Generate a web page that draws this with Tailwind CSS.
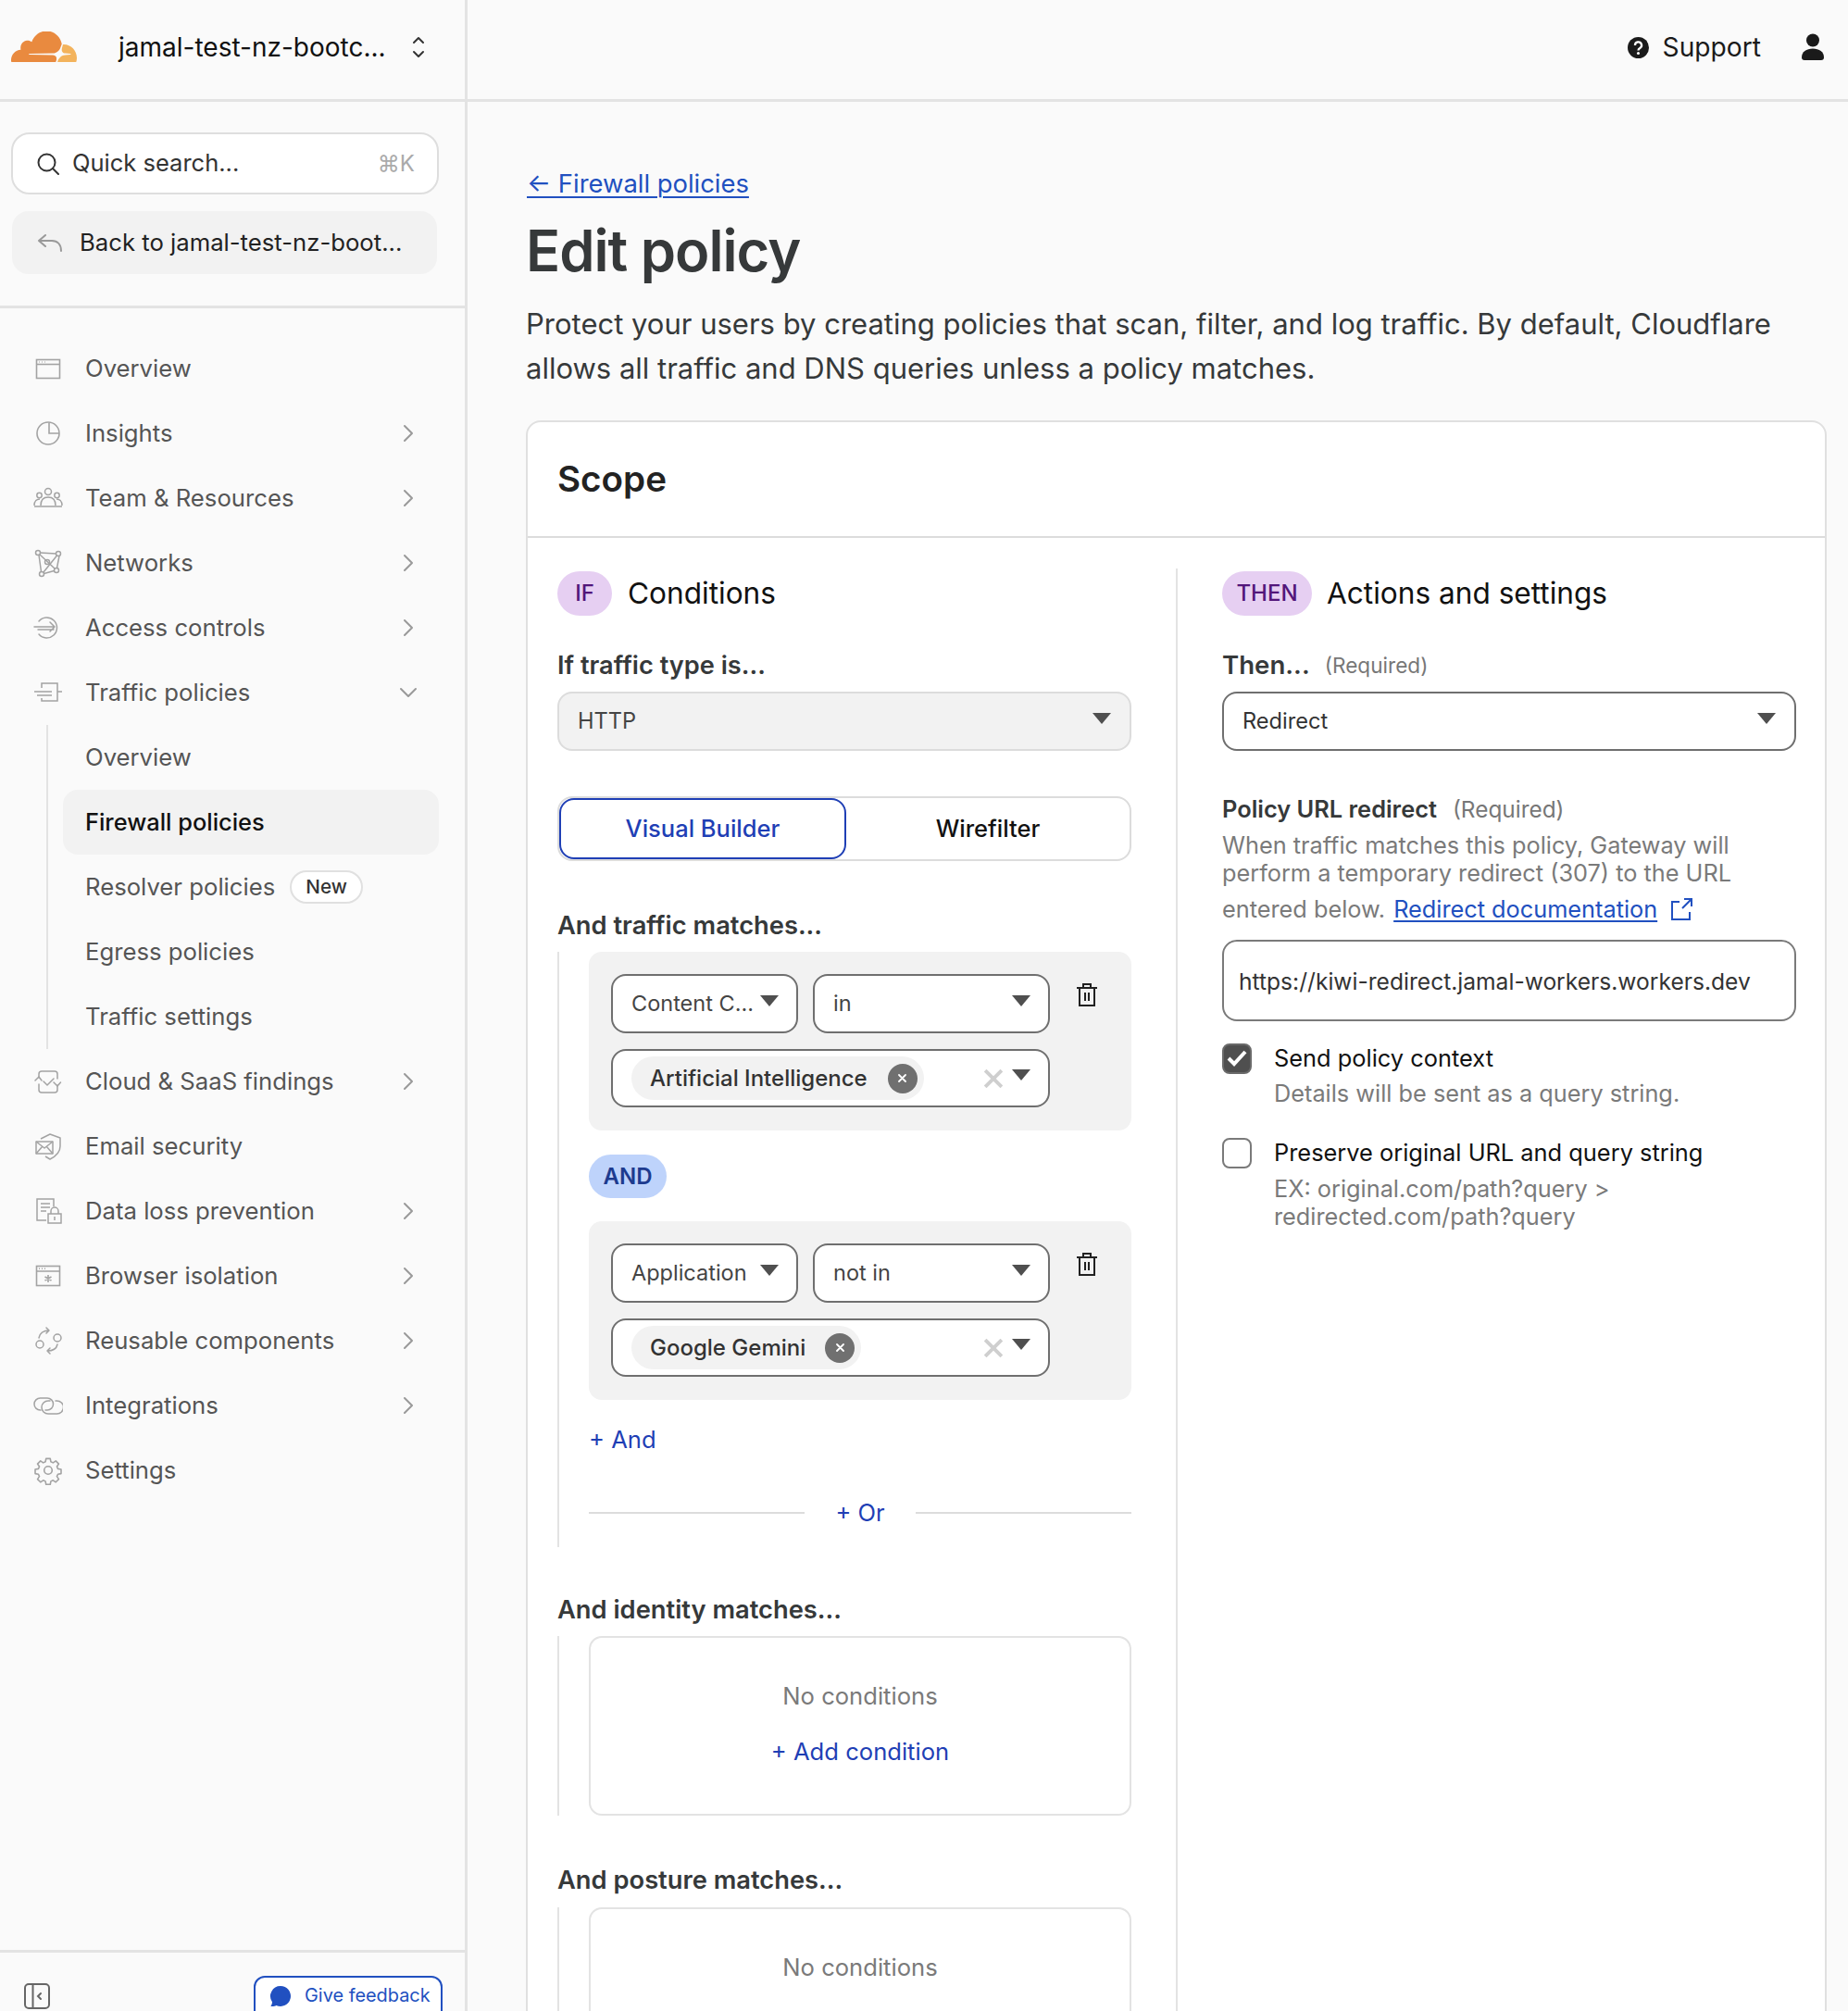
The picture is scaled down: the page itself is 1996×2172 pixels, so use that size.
<!doctype html>
<html lang="en">
<head>
<meta charset="utf-8">
<script src="https://cdn.jsdelivr.net/npm/@tailwindcss/browser@4"></script>
<title>Edit policy</title>
</head>
<body class="font-[Inter,sans-serif]">
<div class="flex w-[1996px] h-[2172px] overflow-hidden bg-[#fafafa] text-[#36393a]">

<!-- Sidebar -->
<aside class="w-[505px] shrink-0 flex flex-col border-r-[3px] border-[#e3e3e3] text-[#555]">
  <div class="h-[110px] shrink-0 border-b-[3px] border-[#e3e3e3] flex items-center pl-[12px] pb-[5px]">
    <svg class="w-[71px] h-[33px] shrink-0 mb-[1px]" viewBox="0 6.75 24 10.7" preserveAspectRatio="none"><path fill="#E98A3F" d="M16.5088 16.8447c.1475-.5068.0908-.9707-.1553-1.3154-.2246-.3164-.6045-.499-1.0615-.5205l-8.6592-.1123a.1559.1559 0 0 1-.1333-.0713c-.0283-.042-.0351-.0986-.021-.1553.0278-.084.1123-.1484.2036-.1562l8.7359-.1123c1.0351-.0489 2.1601-.8868 2.5537-1.9136l.499-1.3013c.0215-.0561.0293-.1128.0147-.168-.5625-2.5463-2.835-4.4453-5.5499-4.4453-2.5039 0-4.6284 1.6177-5.3876 3.8614-.4927-.3658-1.1187-.5625-1.794-.499-1.2026.119-2.1665 1.083-2.2861 2.2856-.0283.31-.0069.6128.0635.894C1.5683 13.171 0 14.7754 0 16.752c0 .1748.0142.3515.0352.5273.0141.083.0844.1475.1689.1475h15.9814c.0909 0 .1758-.0645.2032-.1553l.12-.4268z"/><path fill="#F3B35C" d="M19.2656 11.2813c-.0771 0-.1611 0-.2383.0112-.0566 0-.1054.0415-.127.0976l-.3378 1.1744c-.1475.5068-.0918.9707.1543 1.3164.2256.3164.6055.498 1.0625.5195l1.8437.1133c.0557 0 .1055.0263.1329.0703.0283.043.0351.1074.0214.1562-.0283.084-.1132.1485-.204.1553l-1.921.1123c-1.041.0488-2.1582.8867-2.5527 1.914l-.1406.3585c-.0283.0713.0215.1416.0986.1416h6.5977c.0771 0 .1474-.0489.169-.126.1122-.4082.1757-.837.1757-1.2803 0-2.6025-2.125-4.727-4.7344-4.727"/></svg>
    <span class="ml-[45px] text-[28px] text-[#111] whitespace-nowrap">jamal-test-nz-bootc...</span>
    <svg class="ml-[27px] w-[16px] h-[26px]" viewBox="0 0 16 26" fill="none" stroke="#333" stroke-width="2" stroke-linecap="round" stroke-linejoin="round"><path d="M3 8l5-5 5 5M3 18l5 5 5-5"/></svg>
  </div>

  <div class="h-[223px] shrink-0 border-b-[3px] border-[#e3e3e3] pl-[12px] pt-[33px]">
    <div class="h-[67px] w-[462px] rounded-[20px] border-2 border-[#dedede] bg-white flex items-center pl-[26px] pr-[24px] text-[25.5px] text-[#333]">
      <svg class="w-[24px] h-[24px] mr-[14px] shrink-0" viewBox="0 0 24 24" fill="none" stroke="#333" stroke-width="2" stroke-linecap="round"><circle cx="10.5" cy="10.5" r="9"/><path d="M17 17l6 6"/></svg>
      <span class="flex-1">Quick search...</span>
      <span class="text-[#aaa] text-[24px]">⌘K</span>
    </div>
    <div class="mt-[18px] ml-[1px] h-[68px] w-[459px] rounded-[18px] bg-[#f2f2f2] flex items-center pl-[27px] text-[25.7px] text-[#222] whitespace-nowrap">
      <svg class="w-[28px] h-[21px] mr-[18px] shrink-0" viewBox="0 0 28 21" fill="none" stroke="#999" stroke-width="2" stroke-linecap="round" stroke-linejoin="round"><path d="M9 2L2 8l7 6M2 8h14c6 0 10 4 10 11"/></svg>
      <span>Back to jamal-test-nz-boot...</span>
    </div>
  </div>

  <nav class="pt-[30px] pl-[36px] text-[25.7px] flex-1">
    <div class="h-[70px] flex items-center"><svg class="w-[32px] h-[32px] mr-[24px] shrink-0" viewBox="0 0 32 32" fill="none" stroke="#a3a3a3" stroke-width="1.6"><rect x="3.5" y="6.5" width="25" height="20"/><path d="M3.5 11.5h25"/><path d="M6 9h1M9 9h1M12 9h1" stroke-width="1.2"/></svg><span>Overview</span></div>
    <div class="h-[70px] flex items-center"><svg class="w-[32px] h-[32px] mr-[24px] shrink-0" viewBox="0 0 32 32" fill="none" stroke="#a3a3a3" stroke-width="1.6"><circle cx="16" cy="16" r="12"/><path d="M17 4.500V16h11"/></svg><span class="flex-1">Insights</span><svg class="w-[12px] h-[20px] mr-[55px]" viewBox="0 0 12 20" fill="none" stroke="#999" stroke-width="2" stroke-linecap="round" stroke-linejoin="round"><path d="M2 2l8 8-8 8"/></svg></div>
    <div class="h-[70px] flex items-center"><svg class="w-[32px] h-[32px] mr-[24px] shrink-0" viewBox="0 0 32 32" fill="none" stroke="#a3a3a3" stroke-width="1.5"><circle cx="16" cy="9" r="3.5"/><circle cx="6.5" cy="13" r="2.7"/><circle cx="25.5" cy="13" r="2.7"/><path d="M1 24c0-5 3-7 6-7M31 24c0-5-3-7-6-7M8 24c0-6 3-9 8-9s8 3 8 9M1 25h30"/></svg><span class="flex-1">Team &amp; Resources</span><svg class="w-[12px] h-[20px] mr-[55px]" viewBox="0 0 12 20" fill="none" stroke="#999" stroke-width="2" stroke-linecap="round" stroke-linejoin="round"><path d="M2 2l8 8-8 8"/></svg></div>
    <div class="h-[70px] flex items-center"><svg class="w-[32px] h-[32px] mr-[24px] shrink-0" viewBox="0 0 32 32" fill="none" stroke="#a3a3a3" stroke-width="1.5"><circle cx="5" cy="5" r="2.5"/><circle cx="27" cy="6" r="2.5"/><circle cx="9" cy="28" r="2.5"/><circle cx="25" cy="24" r="2.5"/><circle cx="15" cy="15" r="2.5"/><path d="M7.5 5L24.500 6M6 7.500L8.500 25.500M28 8.500L25.500 21.500M11.500 27.500L22.500 24.500M7 7L23 22M25.500 8L11 26"/></svg><span class="flex-1">Networks</span><svg class="w-[12px] h-[20px] mr-[55px]" viewBox="0 0 12 20" fill="none" stroke="#999" stroke-width="2" stroke-linecap="round" stroke-linejoin="round"><path d="M2 2l8 8-8 8"/></svg></div>
    <div class="h-[70px] flex items-center"><svg class="w-[32px] h-[32px] mr-[24px] shrink-0" viewBox="0 0 32 32" fill="none" stroke="#a3a3a3" stroke-width="1.5" stroke-linecap="round" stroke-linejoin="round"><path d="M6 9a11 11 0 1 1 0 14"/><path d="M1 15h22M5 18h17M18 10l5 5-5 5"/></svg><span class="flex-1">Access controls</span><svg class="w-[12px] h-[20px] mr-[55px]" viewBox="0 0 12 20" fill="none" stroke="#999" stroke-width="2" stroke-linecap="round" stroke-linejoin="round"><path d="M2 2l8 8-8 8"/></svg></div>
    <div class="h-[70px] flex items-center"><svg class="w-[32px] h-[32px] mr-[24px] shrink-0" viewBox="0 0 32 32" fill="none" stroke="#a3a3a3" stroke-width="1.5"><path d="M9 11V6h17v19H9v-3"/><path d="M1 15h19M4 19h16M26 15h5"/></svg><span class="flex-1">Traffic policies</span><svg class="w-[20px] h-[12px] mr-[51px]" viewBox="0 0 20 12" fill="none" stroke="#999" stroke-width="2" stroke-linecap="round" stroke-linejoin="round"><path d="M2 2l8 8 8-8"/></svg></div>

    <div class="ml-[14px] border-l-2 border-[#e3e3e3] pl-[16px] w-[424px]">
      <div class="h-[70px] flex items-center pl-[24px]">Overview</div>
      <div class="h-[70px] flex items-center pl-[24px] rounded-[16px] bg-[#f2f2f2] text-[#111] text-[25.4px] font-medium">Firewall policies</div>
      <div class="h-[70px] flex items-center pl-[24px]">Resolver policies<span class="ml-[16px] h-[36px] px-[15px] flex items-center rounded-full border-2 border-[#e0e0e0] bg-white text-[20.7px] font-medium text-[#333]">New</span></div>
      <div class="h-[70px] flex items-center pl-[24px]">Egress policies</div>
      <div class="h-[70px] flex items-center pl-[24px]">Traffic settings</div>
    </div>

    <div class="h-[70px] flex items-center"><svg class="w-[32px] h-[32px] mr-[24px] shrink-0" viewBox="0 0 32 32" fill="none" stroke="#a3a3a3" stroke-width="1.5" stroke-linecap="round" stroke-linejoin="round"><path d="M6 12V8a3 3 0 0 1 3-3h14a3 3 0 0 1 3 3v5M26 20v5a3 3 0 0 1-3 3H9a3 3 0 0 1-3-3v-6"/><path d="M2 15l4-4 3 4M29.500 17l-3.500 4-4-4M11 16l4 4 7-7"/></svg><span class="flex-1">Cloud &amp; SaaS findings</span><svg class="w-[12px] h-[20px] mr-[55px]" viewBox="0 0 12 20" fill="none" stroke="#999" stroke-width="2" stroke-linecap="round" stroke-linejoin="round"><path d="M2 2l8 8-8 8"/></svg></div>
    <div class="h-[70px] flex items-center"><svg class="w-[32px] h-[32px] mr-[24px] shrink-0" viewBox="0 0 32 32" fill="none" stroke="#a3a3a3" stroke-width="1.5" stroke-linejoin="round"><path d="M8 8l10-5 11 4v9c0 7-5 11-11 14l-5-3"/><rect x="3" y="11" width="18" height="13"/><path d="M3 11l9 7 9-7M3 24l7-8M21 24l-7-8"/></svg><span class="flex-1">Email security</span></div>
    <div class="h-[70px] flex items-center"><svg class="w-[32px] h-[32px] mr-[24px] shrink-0" viewBox="0 0 32 32" fill="none" stroke="#a3a3a3" stroke-width="1.5"><path d="M14 26H4V3h18v8"/><path d="M8 8h10M8 12h10M8 16h6"/><rect x="16" y="19" width="14" height="10"/><path d="M19 19v-3a4 4 0 0 1 8 0v3M23 22v4"/></svg><span class="flex-1">Data loss prevention</span><svg class="w-[12px] h-[20px] mr-[55px]" viewBox="0 0 12 20" fill="none" stroke="#999" stroke-width="2" stroke-linecap="round" stroke-linejoin="round"><path d="M2 2l8 8-8 8"/></svg></div>
    <div class="h-[70px] flex items-center"><svg class="w-[32px] h-[32px] mr-[24px] shrink-0" viewBox="0 0 32 32" fill="none" stroke="#a3a3a3" stroke-width="1.6"><rect x="3.500" y="5.500" width="25" height="21"/><path d="M3.500 11h25M6 8.300h1M9 8.300h1M12 8.300h1M16 15v8M12.500 17l7 4M19.500 17l-7 4"/></svg><span class="flex-1">Browser isolation</span><svg class="w-[12px] h-[20px] mr-[55px]" viewBox="0 0 12 20" fill="none" stroke="#999" stroke-width="2" stroke-linecap="round" stroke-linejoin="round"><path d="M2 2l8 8-8 8"/></svg></div>
    <div class="h-[70px] flex items-center"><svg class="w-[32px] h-[32px] mr-[24px] shrink-0" viewBox="0 0 32 32" fill="none" stroke="#a3a3a3" stroke-width="1.5" stroke-linecap="round" stroke-linejoin="round"><circle cx="26" cy="13" r="4"/><circle cx="7" cy="20" r="4"/><path d="M6 13c1-5 5-8 11-8M14 2l3 3-3 3M26 20c-1 5-6 7-11 7M18 30l-3-3 3-3"/></svg><span class="flex-1">Reusable components</span><svg class="w-[12px] h-[20px] mr-[55px]" viewBox="0 0 12 20" fill="none" stroke="#999" stroke-width="2" stroke-linecap="round" stroke-linejoin="round"><path d="M2 2l8 8-8 8"/></svg></div>
    <div class="h-[70px] flex items-center"><svg class="w-[32px] h-[32px] mr-[24px] shrink-0" viewBox="0 0 32 32" fill="none" stroke="#a3a3a3" stroke-width="1.5" stroke-linecap="round"><path d="M8 21h-.5a6.500 6.500 0 0 1 0-13H15a6.500 6.500 0 0 1 6.500 6.500 6.500 6.500 0 0 1-6.500 6.500h-2"/><path d="M24 11h1.500a7 7 0 0 1 0 14H16a7 7 0 0 1-7-7 7 7 0 0 1 7-7h2"/></svg><span class="flex-1">Integrations</span><svg class="w-[12px] h-[20px] mr-[55px]" viewBox="0 0 12 20" fill="none" stroke="#999" stroke-width="2" stroke-linecap="round" stroke-linejoin="round"><path d="M2 2l8 8-8 8"/></svg></div>
    <div class="h-[70px] flex items-center"><svg class="w-[32px] h-[32px] mr-[24px] shrink-0" viewBox="0 0 24 24" fill="none" stroke="#a3a3a3" stroke-width="1.2" stroke-linejoin="round"><circle cx="12" cy="12" r="3.200"/><path d="M10.300 2.500h3.400l.5 2.600 1.800.8 2.200-1.500 2.400 2.400-1.500 2.200.8 1.800 2.600.5v3.400l-2.600.5-.8 1.800 1.500 2.200-2.400 2.400-2.200-1.500-1.800.8-.5 2.600h-3.400l-.5-2.600-1.800-.8-2.200 1.500-2.400-2.400 1.500-2.200-.8-1.800-2.600-.5v-3.400l2.600-.5.8-1.800-1.500-2.200 2.400-2.400 2.200 1.500 1.800-.8z"/></svg><span>Settings</span></div>
  </nav>

  <div class="h-[66px] shrink-0 border-t-[3px] border-[#e3e3e3] flex items-start justify-between pl-[26px] pr-[24px] pt-[25px]">
    <svg class="w-[28px] h-[28px] mt-[8px]" viewBox="0 0 28 28" fill="none" stroke="#666" stroke-width="2"><rect x="1" y="1" width="26" height="26" rx="4"/><path d="M9.500 1v26M18 11l-3 3 3 3" stroke-linecap="round"/></svg>
    <div class="w-[204px] h-[60px] shrink-0 rounded-[12px] border-2 border-[#2150c0] bg-white flex items-center pb-[17px] pl-[15px] text-[19.9px] text-[#2150c0]">
      <svg class="w-[24px] h-[24px] mr-[14px]" viewBox="0 0 24 24" fill="#2150c0"><path d="M12 1a11 11 0 1 1-4.600 21c-1.500.8-3.400 1.200-6 .9 1-1.300 1.500-2.800 1.600-4.600A11 11 0 0 1 12 1z"/></svg>
      <span>Give feedback</span>
    </div>
  </div>
</aside>

<!-- Main -->
<main class="flex-1 min-w-0">
  <header class="h-[110px] border-b-[3px] border-[#e3e3e3] flex items-center justify-end pr-[26px] pb-[5px] text-[#1a1a1a]">
    <svg class="w-[23px] h-[23px] mr-[15px]" viewBox="0 0 24 24"><circle cx="12" cy="12" r="12" fill="#1a1a1a"/><path d="M8.300 9.300a3.700 3.700 0 1 1 5.500 3.200c-1.200.7-1.800 1.200-1.800 2.500" fill="none" stroke="#fff" stroke-width="2.400"/><circle cx="12" cy="18.300" r="1.600" fill="#fff"/></svg>
    <span class="text-[28.2px] mr-[44px]">Support</span>
    <svg class="w-[24px] h-[30px]" viewBox="0 0 24 30" fill="#1a1a1a"><circle cx="12" cy="7.500" r="7"/><path d="M0 26c0-6 5-9.500 12-9.500S24 20 24 26c0 2-1 3-3 3H3c-2 0-3-1-3-3z"/></svg>
  </header>

  <div class="pl-[63px] pr-[23px]">
    <div class="mt-[69px] ml-[1px] h-[40px] flex items-center text-[#2150c0] text-[27.4px]">
      <span class="underline underline-offset-[4px] decoration-2 whitespace-pre">← Firewall policies</span>
    </div>
    <h1 class="mt-[17px] h-[70px] leading-[70px] text-[61.4px] font-semibold tracking-[-1px] text-[#36393a]">Edit policy</h1>
    <p class="mt-[20px] text-[31px] leading-[48px] text-[#36393a] w-[1400px]">Protect your users by creating policies that scan, filter, and log traffic. By default, Cloudflare allows all traffic and DNS queries unless a policy matches.</p>

    <section class="mt-[32px] w-[1405px] h-[1800px] bg-white rounded-[16px] border-2 border-[#e0e0e0]">
      <div class="h-[125px] border-b-2 border-[#dcdcdc] pl-[32px] flex items-center"><h2 class="text-[38.6px] font-semibold text-[#222]">Scope</h2></div>

      <div class="flex pl-[32px] pt-[36px]">
        <!-- IF column -->
        <div class="w-[620px] shrink-0">
          <div class="flex items-center h-[48px]">
            <span class="w-[59px] h-[48px] rounded-[24px] bg-[#e6cff2] text-[#52167a] font-medium text-[24px] flex items-center justify-center">IF</span>
            <span class="ml-[17px] text-[31.6px] text-[#111]">Conditions</span>
          </div>
          <div class="mt-[34px] h-[40px] flex items-center text-[27.2px] font-semibold">If traffic type is...</div>
          <div class="mt-[8px] h-[64px] rounded-[16px] border-2 border-[#dcdcdc] bg-[#f2f2f2] flex items-center justify-between pl-[20px] pr-[20px] text-[23.6px] text-[#444]"><span>HTTP</span><svg class="w-[20px] h-[12px] mb-[7px]" viewBox="0 0 20 12" fill="#4f4f4f"><path d="M0 0h20L10 12z"/></svg></div>

          <div class="mt-[49px] h-[70px] rounded-[16px] border-2 border-[#dcdcdc] flex text-[25.5px] font-medium">
            <div class="w-[310px] h-[66px] rounded-[16px] border-2 border-[#1f3fb5] text-[#1f3fb5] flex items-center justify-center">Visual Builder</div>
            <div class="flex-1 flex items-center justify-center text-[#111]">Wirefilter</div>
          </div>

          <div class="mt-[50px] h-[40px] flex items-center text-[27.3px] font-semibold">And traffic matches...</div>
          <div class="mt-[8px] border-l-2 border-[#e3e3e3] pl-[32px] pb-[17px] w-[620px]">
            <div class="h-[193px] rounded-[14px] bg-[#f2f2f2] p-[24px] text-[23.5px] text-[#444]">
              <div class="flex items-start">
                <div class="w-[202px] h-[64px] rounded-[16px] border-2 border-[#6f6f6f] bg-white flex items-center justify-between pl-[20px] pr-[19px]"><span class="whitespace-nowrap">Content C...</span><svg class="w-[20px] h-[12px] mb-[7px] shrink-0" viewBox="0 0 20 12" fill="#4f4f4f"><path d="M0 0h20L10 12z"/></svg></div>
                <div class="ml-[16px] w-[256px] h-[64px] rounded-[16px] border-2 border-[#6f6f6f] bg-white flex items-center justify-between pl-[20px] pr-[19px]"><span>in</span><svg class="w-[20px] h-[12px] mb-[7px] shrink-0" viewBox="0 0 20 12" fill="#4f4f4f"><path d="M0 0h20L10 12z"/></svg></div>
                <svg class="ml-[29px] mt-[9px] w-[22px] h-[26px]" viewBox="0 0 22 26" fill="none" stroke="#222" stroke-width="2"><path d="M3 6v19h16V6M0 6h22M7 6V2h8v4M9 11v9M13 11v9"/></svg>
              </div>
              <div class="mt-[17px] w-[474px] h-[63px] rounded-[16px] border-2 border-[#6f6f6f] bg-white flex items-center pl-[20px] pr-[19px]">
                <span class="h-[47px] rounded-full bg-[#f2f2f2] flex items-center pl-[20px] pr-[7px] text-[24px] font-medium text-[#333]">Artificial Intelligence<span class="ml-[22px] w-[32px] h-[32px] rounded-full bg-[#707070] flex items-center justify-center"><svg class="w-[9px] h-[9px]" viewBox="0 0 9 9" stroke="#fff" stroke-width="1.800" stroke-linecap="round"><path d="M1 1l7 7M8 1L1 8"/></svg></span></span>
                <span class="flex-1"></span>
                <svg class="w-[20px] h-[20px] mr-[10px]" viewBox="0 0 18 18" stroke="#cfcfcf" stroke-width="3.500"><path d="M1 1l16 16M17 1L1 17"/></svg>
                <svg class="w-[20px] h-[12px] mb-[7px] shrink-0" viewBox="0 0 20 12" fill="#4f4f4f"><path d="M0 0h20L10 12z"/></svg>
              </div>
            </div>
            <div class="mt-[26px] w-[84px] h-[47px] rounded-[24px] bg-[#bed3fb] text-[#1d3b8f] font-semibold text-[24px] flex items-center justify-center">AND</div>
            <div class="mt-[25px] h-[193px] rounded-[14px] bg-[#f2f2f2] p-[24px] text-[23.5px] text-[#444]">
              <div class="flex items-start">
                <div class="w-[202px] h-[64px] rounded-[16px] border-2 border-[#6f6f6f] bg-white flex items-center justify-between pl-[20px] pr-[19px]"><span class="whitespace-nowrap">Application</span><svg class="w-[20px] h-[12px] mb-[7px] shrink-0" viewBox="0 0 20 12" fill="#4f4f4f"><path d="M0 0h20L10 12z"/></svg></div>
                <div class="ml-[16px] w-[256px] h-[64px] rounded-[16px] border-2 border-[#6f6f6f] bg-white flex items-center justify-between pl-[20px] pr-[19px]"><span>not in</span><svg class="w-[20px] h-[12px] mb-[7px] shrink-0" viewBox="0 0 20 12" fill="#4f4f4f"><path d="M0 0h20L10 12z"/></svg></div>
                <svg class="ml-[29px] mt-[9px] w-[22px] h-[26px]" viewBox="0 0 22 26" fill="none" stroke="#222" stroke-width="2"><path d="M3 6v19h16V6M0 6h22M7 6V2h8v4M9 11v9M13 11v9"/></svg>
              </div>
              <div class="mt-[17px] w-[474px] h-[63px] rounded-[16px] border-2 border-[#6f6f6f] bg-white flex items-center pl-[20px] pr-[19px]">
                <span class="h-[47px] rounded-full bg-[#f2f2f2] flex items-center pl-[20px] pr-[7px] text-[24px] font-medium text-[#333]">Google Gemini<span class="ml-[21px] w-[32px] h-[32px] rounded-full bg-[#707070] flex items-center justify-center"><svg class="w-[9px] h-[9px]" viewBox="0 0 9 9" stroke="#fff" stroke-width="1.800" stroke-linecap="round"><path d="M1 1l7 7M8 1L1 8"/></svg></span></span>
                <span class="flex-1"></span>
                <svg class="w-[20px] h-[20px] mr-[10px]" viewBox="0 0 18 18" stroke="#cfcfcf" stroke-width="3.500"><path d="M1 1l16 16M17 1L1 17"/></svg>
                <svg class="w-[20px] h-[12px] mb-[7px] shrink-0" viewBox="0 0 20 12" fill="#4f4f4f"><path d="M0 0h20L10 12z"/></svg>
              </div>
            </div>
            <div class="mt-[23px] h-[40px] flex items-center text-[25.6px] text-[#1f3fb5]">+ And</div>
            <div class="mt-[39px] h-[40px] flex items-center text-[25.5px] text-[#1f3fb5]">
              <span class="flex-1 h-[2px] bg-[#dcdcdc]"></span><span class="mx-[33px]">+ Or</span><span class="flex-1 h-[2px] bg-[#dcdcdc]"></span>
            </div>
          </div>

          <div class="mt-[48px] h-[40px] flex items-center text-[27.3px] font-semibold">And identity matches...</div>
          <div class="mt-[8px] border-l-2 border-[#e3e3e3] pl-[32px] w-[620px]">
            <div class="h-[194px] rounded-[14px] border-2 border-[#e3e3e3] flex flex-col items-center pt-[43px] text-[25.6px]">
              <span class="h-[40px] flex items-center text-[#7a7a7a]">No conditions</span>
              <span class="mt-[20px] h-[40px] flex items-center text-[#1f3fb5]">+ Add condition</span>
            </div>
          </div>

          <div class="mt-[50px] h-[40px] flex items-center text-[27.3px] font-semibold">And posture matches...</div>
          <div class="mt-[9px] border-l-2 border-[#e3e3e3] pl-[32px] w-[620px]">
            <div class="h-[194px] rounded-[14px] border-2 border-[#e3e3e3] flex flex-col items-center pt-[43px] text-[25.6px]">
              <span class="h-[40px] flex items-center text-[#7a7a7a]">No conditions</span>
            </div>
          </div>
        </div>

        <!-- divider -->
        <div class="ml-[48px] mr-[48px] w-[2px] shrink-0 bg-[#e3e3e3] h-[1560px] mt-[-3px]"></div>

        <!-- THEN column -->
        <div class="w-[620px] shrink-0">
          <div class="flex items-center h-[48px]">
            <span class="w-[97px] h-[48px] rounded-[24px] bg-[#e6cff2] text-[#52167a] font-medium text-[24px] flex items-center justify-center">THEN</span>
            <span class="ml-[16px] text-[31.6px] text-[#111]">Actions and settings</span>
          </div>
          <div class="mt-[34px] h-[40px] flex items-center text-[27.6px] font-semibold">Then...<span class="ml-[16px] text-[22.6px] font-normal text-[#777]">(Required)</span></div>
          <div class="mt-[8px] h-[64px] rounded-[16px] border-2 border-[#6f6f6f] flex items-center justify-between pl-[20px] pr-[20px] text-[23.6px] text-[#333]"><span>Redirect</span><svg class="w-[20px] h-[12px] mb-[7px]" viewBox="0 0 20 12" fill="#4f4f4f"><path d="M0 0h20L10 12z"/></svg></div>
          <div class="mt-[43px] h-[40px] flex items-center text-[25.4px] font-semibold">Policy URL redirect<span class="ml-[17px] font-normal text-[24.4px] text-[#777]">(Required)</span></div>
          <p class="mt-[4px] text-[25.3px] leading-[30px] text-[#7a7a7a] whitespace-nowrap">When traffic matches this policy, Gateway will<br>perform a temporary redirect (307) to the URL</p>
          <div class="mt-[4px] h-[40px] flex items-center text-[25.3px] text-[#7a7a7a] whitespace-nowrap">entered below.<span class="ml-[9px] text-[#2150c0] underline underline-offset-[3px]">Redirect documentation</span><svg class="ml-[14px] w-[24px] h-[24px]" viewBox="0 0 24 24" fill="none" stroke="#2150c0" stroke-width="2"><path d="M10 4H2v19h19v-8M13 11L23 1M15 1h8v8"/></svg></div>
          <div class="mt-[13px] h-[88px] rounded-[16px] border-2 border-[#7a7a7a] flex items-center pl-[16px] pt-[2px] text-[24.6px] text-[#333] whitespace-nowrap">https://kiwi-redirect.jamal-workers.workers.dev</div>

          <div class="mt-[20px] h-[40px] flex items-center text-[25.4px] text-[#111]">
            <span class="w-[32px] h-[33px] rounded-[8px] bg-[#4f4f4f] border-2 border-[#6a6a6a] mr-[24px] flex items-center justify-center"><svg class="w-[22px] h-[18px]" viewBox="0 0 22 18" fill="none" stroke="#fff" stroke-width="4"><path d="M2 9l6 6L20 2"/></svg></span>Send policy context
          </div>
          <div class="mt-[3px] ml-[56px] h-[30px] flex items-center text-[25.3px] text-[#7a7a7a]">Details will be sent as a query string.</div>

          <div class="mt-[29px] h-[40px] flex items-center text-[25.4px] text-[#111]">
            <span class="w-[32px] h-[33px] rounded-[8px] bg-white border-2 border-[#7a7a7a] mr-[24px]"></span>Preserve original URL and query string
          </div>
          <p class="mt-[4px] ml-[56px] text-[25.3px] leading-[30px] text-[#7a7a7a]">EX: original.com/path?query &gt;<br>redirected.com/path?query</p>
        </div>
      </div>
    </section>
  </div>
</main>
</div>
</body>
</html>
